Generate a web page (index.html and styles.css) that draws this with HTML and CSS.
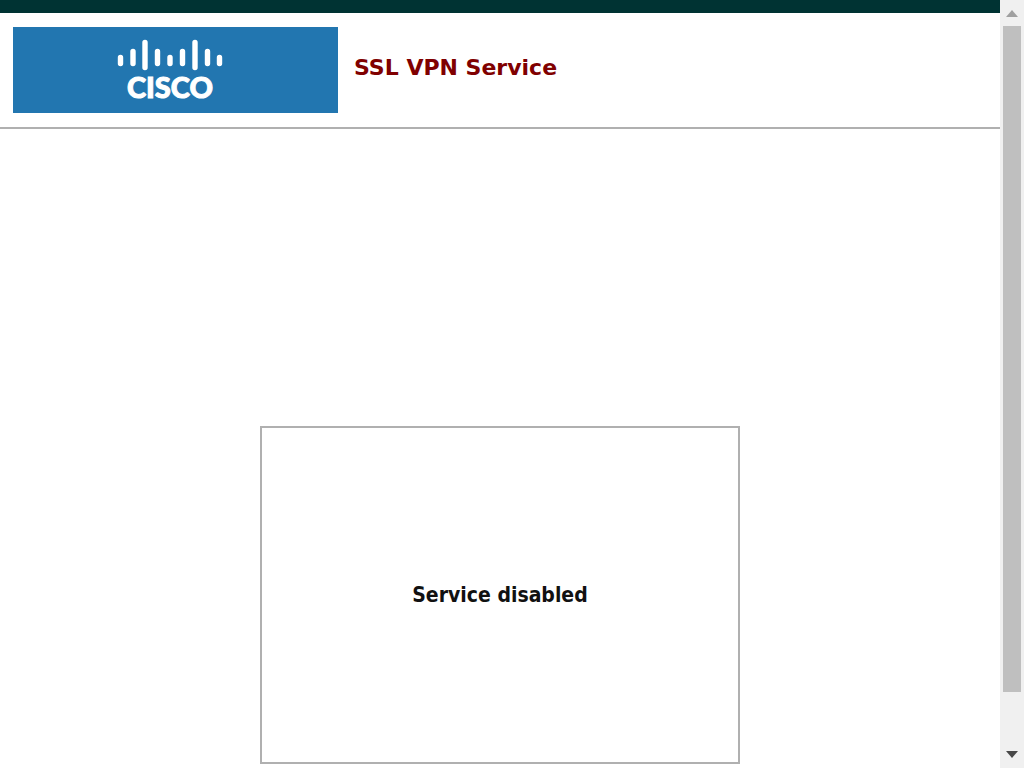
FILE: index.html
```html
<!DOCTYPE html>
<html lang="en">
<head>
<meta charset="utf-8">
<title>SSL VPN Service</title>
<link rel="stylesheet" href="styles.css">
</head>
<body>
<div class="window">
  <div class="page">
    <header class="header">
      <svg class="logo" viewBox="0 0 325 86" role="img" aria-label="Cisco">
        <g stroke="#fff" stroke-width="5.4" stroke-linecap="round">
          <path d="M107.500 30.500v6M120 24.500v12M132 15.500v25M144.500 24.500v12M157 30.500v6M169.500 24.500v12M182 15.500v25M194.500 24.500v12M206.500 30.500v6"/>
        </g>
        <text class="logo-name" x="157" y="71" text-anchor="middle">CISCO</text>
      </svg>
      <h1 class="title">SSL VPN Service</h1>
    </header>
    <main class="content">
      <section class="panel">
        <p class="message">Service disabled</p>
      </section>
    </main>
  </div>
  <div class="scrollbar" aria-hidden="true">
    <svg class="arrow arrow-up" viewBox="0 0 12 7"><path d="M0 7L6 0l6 7z"/></svg>
    <div class="track"><div class="thumb"></div></div>
    <svg class="arrow arrow-down" viewBox="0 0 12 7"><path d="M0 0h12L6 7z"/></svg>
  </div>
</div>
</body>
</html>
```
FILE: styles.css
```css
* {
  box-sizing: border-box;
}

body {
  margin: 0;
  background: #fff;
  font-family: "DejaVu Sans", Verdana, sans-serif;
}

.window {
  display: flex;
  min-height: 100vh;
}

.page {
  flex: 1;
  display: flex;
  flex-direction: column;
  border-top: 13px solid #033;
}

.header {
  display: flex;
  gap: 16px;
  padding: 14px 13px;
  border-bottom: 2px solid #b0b0b0;
}

.logo {
  width: 325px;
  height: 86px;
  background: #2276b0;
}

.logo-name {
  fill: #fff;
  stroke: #fff;
  stroke-width: 1px;
  font-family: Lato, sans-serif;
  font-size: 29px;
  font-weight: 900;
}

.title {
  margin: 0;
  color: #800000;
  font-size: 22px;
  line-height: 82px;
}

.content {
  flex: 1;
  display: flex;
  flex-direction: column;
  justify-content: flex-end;
  align-items: center;
  padding: 0 16px 4px;
}

.panel {
  display: flex;
  align-items: center;
  justify-content: center;
  width: 100%;
  max-width: 480px;
  min-height: 338px;
  border: 2px solid #b0b0b0;
}

.message {
  margin: 0;
  color: #111;
  font-family: "DejaVu Sans Condensed", "DejaVu Sans", sans-serif;
  font-size: 21px;
  font-stretch: condensed;
  font-weight: bold;
  line-height: 26px;
}

.scrollbar {
  display: flex;
  flex-direction: column;
  align-items: center;
  width: 24px;
  padding: 10px 3px;
  background: #f0f0f0;
}

.arrow {
  width: 12px;
  height: 7px;
}

.arrow-up {
  fill: #a0a0a0;
}

.arrow-down {
  fill: #484848;
}

.track {
  flex: 1;
  width: 100%;
  padding: 9px 0;
}

.thumb {
  height: 93%;
  background: #bfbfbf;
}
```
